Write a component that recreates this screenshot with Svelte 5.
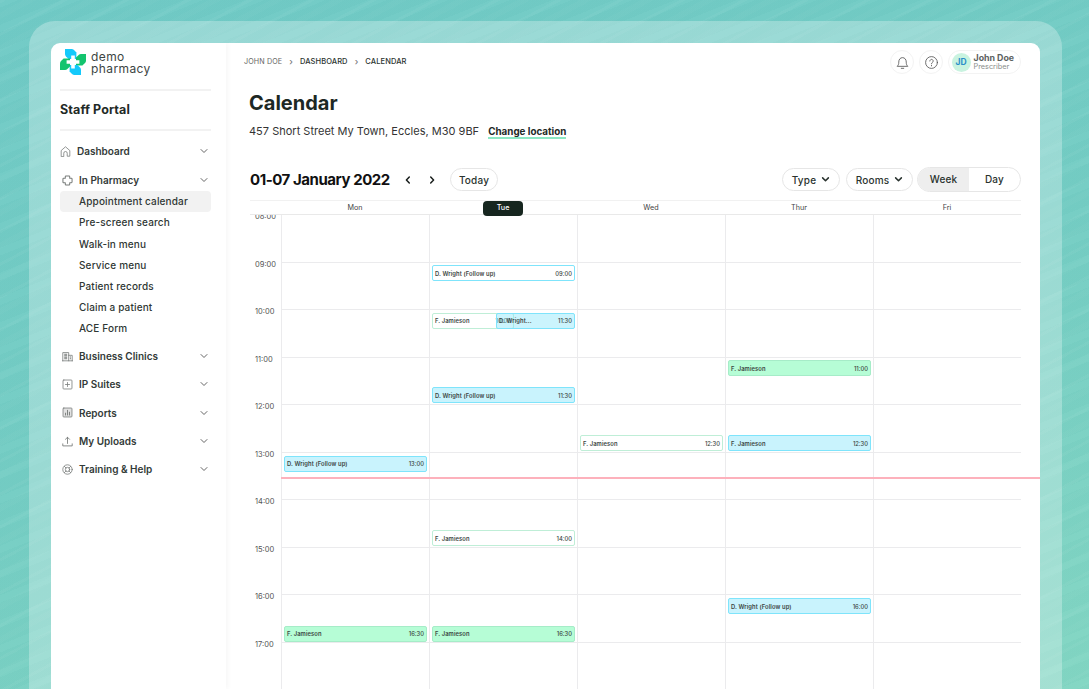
<script>
  const subItems = ['Appointment calendar', 'Pre-screen search', 'Walk-in menu', 'Service menu', 'Patient records', 'Claim a patient', 'ACE Form'];
  const bottomNav = [
    { label: 'Business Clinics', icon: 'clinic' },
    { label: 'IP Suites', icon: 'plus' },
    { label: 'Reports', icon: 'chart' },
    { label: 'My Uploads', icon: 'upload' },
    { label: 'Training & Help', icon: 'help' }
  ];
  const days = ['Mon', 'Tue', 'Wed', 'Thur', 'Fri'];
  const hours = ['08:00', '09:00', '10:00', '11:00', '12:00', '13:00', '14:00', '15:00', '16:00', '17:00'];

  // top = px below the header row, kinds: line / fill, blue / green
  const events = [
    { day: 0, top: 240.5, name: 'D. Wright (Follow up)', time: '13:00', kind: 'blue fill' },
    { day: 0, top: 410.5, name: 'F. Jamieson', time: '16:30', kind: 'green fill' },
    { day: 1, top: 50, name: 'D. Wright (Follow up)', time: '09:00', kind: 'blue' },
    { day: 1, top: 97.5, name: 'F. Jamieson', time: '10:00', kind: 'green half-left' },
    { day: 1, top: 97.5, name: 'D. Wright...', time: '11:30', kind: 'blue fill half-right' },
    { day: 1, top: 172, name: 'D. Wright (Follow up)', time: '11:30', kind: 'blue fill' },
    { day: 1, top: 315, name: 'F. Jamieson', time: '14:00', kind: 'green' },
    { day: 1, top: 410.5, name: 'F. Jamieson', time: '16:30', kind: 'green fill' },
    { day: 2, top: 220, name: 'F. Jamieson', time: '12:30', kind: 'green' },
    { day: 3, top: 145, name: 'F. Jamieson', time: '11:00', kind: 'green fill' },
    { day: 3, top: 220, name: 'F. Jamieson', time: '12:30', kind: 'blue fill' },
    { day: 3, top: 383, name: 'D. Wright (Follow up)', time: '16:00', kind: 'blue fill' }
  ];
</script>

{#snippet chevron()}
  <svg class="chev" viewBox="0 0 10 10"><path d="M2 3.5 5 6.5 8 3.5" fill="none" stroke="#666" stroke-width="1" stroke-linecap="round" stroke-linejoin="round" /></svg>
{/snippet}

{#snippet boldChevron()}
  <svg class="bchev" viewBox="0 0 10 10"><path d="M1.8 3.2 5 6.4 8.2 3.2" fill="none" stroke="#2a332f" stroke-width="1.7" stroke-linecap="round" stroke-linejoin="round" /></svg>
{/snippet}

{#snippet navIcon(name)}
  <svg class="nav-icon" viewBox="0 0 14 14" fill="none" stroke="#777b79" stroke-width="1" stroke-linecap="round" stroke-linejoin="round">
    {#if name === 'home'}
      <path d="M1.5 13V5.8L7 1l5.5 4.8V13H9.2V9.2a2.2 2.2 0 0 0-4.4 0V13Z" />
    {:else if name === 'cross'}
      <path d="M5 1.2h4a.8.8 0 0 1 .8.8v2.2H12a.8.8 0 0 1 .8.8v4a.8.8 0 0 1-.8.8H9.8V12a.8.8 0 0 1-.8.8H5a.8.8 0 0 1-.8-.8V9.8H2a.8.8 0 0 1-.8-.8V5a.8.8 0 0 1 .8-.8h2.2V2a.8.8 0 0 1 .8-.8Z" stroke-width="1.3" />
    {:else if name === 'clinic'}
      <path d="M1 12.5V2h7.500v10.500M8.500 5.500H13v7M.6 12.500h12.800" />
      <path d="M2.800 4h3.800M2.800 6h3.800M2.800 8h3.800M2.800 10h3.800M10 7.500h1.500M10 9.800h1.500" stroke-width="1.3" stroke-linecap="butt" />
    {:else if name === 'plus'}
      <rect x="1.3" y="1.3" width="11.4" height="11.4" rx="1" />
      <path d="M7 4.4v5.200M4.400 7h5.200" />
    {:else if name === 'chart'}
      <rect x="1.3" y="1.3" width="11.4" height="11.4" rx="1" fill="#e2e2e2" />
      <path d="M4.500 10.300V7.800M7 10.300V4.200M9.500 10.300V6.600" stroke-width="1.2" />
    {:else if name === 'upload'}
      <path d="M7 9.500V1.800M4.400 4.200 7 1.600l2.600 2.600M1 10v2.600h12V10" stroke-width="1.1" />
    {:else}
      <circle cx="7" cy="7" r="6" />
      <circle cx="7" cy="7" r="2.8" />
      <path d="M2.900 2.900l2.200 2.200M11.100 2.900 8.900 5.100M2.900 11.100l2.200-2.200M11.100 11.100 8.900 8.900" />
    {/if}
  </svg>
{/snippet}

<div class="frame">
  <div class="window">
    <aside class="sidebar">
      <div class="logo">
        <svg class="logo-mark" viewBox="0 0 26 26">
          {#each [['#14c9fb', 0], ['#13c46e', 90], ['#14c9fb', 180], ['#13c46e', 270]] as [fill, turn]}
            <path d="M5 0H11.5Q13 0 14 1L16.4 3.6V10H8.6L6 7.4Q5 6.4 5 5Z" {fill} transform="rotate({turn} 13 13)" />
          {/each}
          <path d="M11.2 6.6h3.6v4.600h4.600v3.600h-4.600v4.600h-3.600v-4.600H6.600v-3.600h4.600Z" fill="#fff" />
        </svg>
        <div class="logo-text">demo<br />pharmacy</div>
      </div>
      <div class="portal">Staff Portal</div>

      <nav>
        <div class="nav-row first">
          {@render navIcon('home')}
          <span class="nav-label">Dashboard</span>
          {@render chevron()}
        </div>
        <div class="nav-row pharm">
          {@render navIcon('cross')}
          <span class="nav-label">In Pharmacy</span>
          {@render chevron()}
        </div>
        <ul class="sub">
          {#each subItems as item, i}
            <li class:active={i === 0}>{item}</li>
          {/each}
        </ul>
        <div class="nav-rest">
          {#each bottomNav as item}
            <div class="nav-row">
              {@render navIcon(item.icon)}
              <span class="nav-label">{item.label}</span>
              {@render chevron()}
            </div>
          {/each}
        </div>
      </nav>
    </aside>

    <main class="main">
      <header class="topbar">
        <div class="crumbs">
          <span class="crumb-muted">JOHN DOE</span>
          <span class="sep">›</span>
          <span>DASHBOARD</span>
          <span class="sep">›</span>
          <span>CALENDAR</span>
        </div>
        <div class="top-actions">
          <button class="round" aria-label="Notifications">
            <svg viewBox="0 0 16 16" fill="none" stroke="#555" stroke-width="0.9" stroke-linecap="round" stroke-linejoin="round"><path d="M2.6 11.8c1-1 1.4-2 1.4-4.2C4 4.800 5.600 2.800 8 2.800s4 2 4 4.800c0 2.200.4 3.200 1.400 4.200ZM6.700 14.200h2.600" /></svg>
          </button>
          <button class="round" aria-label="Help">
            <svg viewBox="0 0 16 16" fill="none" stroke="#555" stroke-width="0.9" stroke-linecap="round"><circle cx="8" cy="8" r="6.3" /><path d="M6.200 6.400a1.800 1.800 0 1 1 2.700 1.600c-.6.400-.9.700-.9 1.400" /><path d="M8 11.300v.1" stroke-width="1.2" /></svg>
          </button>
          <div class="profile">
            <div class="avatar">JD</div>
            <div class="who">
              <div class="who-name">John Doe</div>
              <div class="who-role">Prescriber</div>
            </div>
          </div>
        </div>
      </header>

      <div class="intro">
        <h1>Calendar</h1>
        <p class="address">457 Short Street My Town, Eccles, M30 9BF <span class="change">Change location</span></p>
      </div>

      <div class="toolbar">
        <div class="date">01-07 January 2022</div>
        <div class="arrows">
          <svg viewBox="0 0 10 10"><path d="M6.300 2 3.400 5l2.900 3" fill="none" stroke="#1a1f1d" stroke-width="1.5" stroke-linecap="round" stroke-linejoin="round" /></svg>
          <svg viewBox="0 0 10 10"><path d="M3.700 2 6.600 5 3.700 8" fill="none" stroke="#1a1f1d" stroke-width="1.5" stroke-linecap="round" stroke-linejoin="round" /></svg>
        </div>
        <button class="pill today">Today</button>
        <div class="filters">
          <button class="pill type">Type {@render boldChevron()}</button>
          <button class="pill rooms">Rooms {@render boldChevron()}</button>
          <div class="segment">
            <span class="seg on">Week</span>
            <span class="seg">Day</span>
          </div>
        </div>
      </div>

      <div class="calendar">
        <div class="cal-head">
          <div></div>
          {#each days as day, i}
            <div class="day-name"><span class:today-pill={i === 1}>{day}</span></div>
          {/each}
        </div>
        <div class="cal-body">
          <div class="times">
            {#each hours as hour}
              <div class="time">{hour}</div>
            {/each}
          </div>
          <div class="columns">
            {#each hours as hour}
              <div class="hour-line"></div>
            {/each}
            <div class="day-cols">
              {#each days as day, d}
                <div class="day-col">
                  {#each events.filter((e) => e.day === d) as ev}
                    <div class="event {ev.kind}" style="top: {ev.top}px">
                      <span class="ev-name">{ev.name}</span>
                      <span class="ev-time">{ev.time}</span>
                    </div>
                  {/each}
                </div>
              {/each}
            </div>
            <div class="now-line"></div>
          </div>
        </div>
      </div>
    </main>
  </div>
</div>

<style>
  :global(body) {
    margin: 0;
    height: 689px;
    overflow: hidden;
    font-family: Inter, 'Liberation Sans', sans-serif;
    background:
      repeating-linear-gradient(152deg, rgba(255, 255, 255, 0.035) 0 3px, rgba(255, 255, 255, 0) 3px 11px, rgba(255, 255, 255, 0.02) 11px 17px, rgba(0, 0, 0, 0) 17px 29px),
      repeating-linear-gradient(158deg, rgba(255, 255, 255, 0.025) 0 7px, rgba(0, 0, 0, 0.008) 7px 23px),
      linear-gradient(165deg, #70cac6 0%, #74cdc4 50%, #82d6c3 100%);
  }

  .frame {
    margin: 21px 27px 0 29px;
    padding: 22px 22px 0;
    height: 646px;
    border-radius: 26px 26px 0 0;
    background: rgba(255, 255, 255, 0.28);
    overflow: hidden;
  }

  .window {
    display: flex;
    height: 646px;
    background: #fff;
    border-radius: 9px 9px 0 0;
    overflow: hidden;
    color: #1d2623;
  }

  .sidebar {
    width: 175px;
    flex: none;
    box-sizing: border-box;
    padding: 6px 15px 0 9px;
    box-shadow: 2px 0 5px rgba(0, 0, 0, 0.035);
    position: relative;
  }

  .logo {
    display: flex;
    align-items: flex-start;
    gap: 5px;
    height: 40px;
    border-bottom: 2px solid #f2f2f2;
  }

  .logo-mark {
    width: 26px;
    height: 26px;
  }

  .logo-text {
    font-size: 12px;
    line-height: 12px;
    letter-spacing: 0.4px;
    color: #3c4543;
    padding-top: 2px;
  }

  .portal {
    height: 38px;
    line-height: 38px;
    font-size: 12.5px;
    font-weight: 700;
    letter-spacing: 0.1px;
    border-bottom: 2px solid #f2f2f2;
    color: #1f2a27;
  }

  .nav-row {
    display: flex;
    align-items: center;
    height: 28.3px;
    font-size: 10px;
    font-weight: 600;
    color: #333b38;
  }

  .nav-row.first {
    margin-top: 6px;
  }

  .pharm {
    margin-top: 4px;
    height: 22px;
  }

  .nav-icon {
    width: 11px;
    height: 11px;
    flex: none;
    margin: 0 6px 0 2px;
  }

  .nav-row.first .nav-icon {
    margin: 0 6px 0 0;
  }

  .nav-label {
    flex: 1;
  }

  .chev {
    width: 10px;
    height: 10px;
    margin-right: 2px;
    flex: none;
  }

  .sub {
    list-style: none;
    margin: 0;
    padding: 0;
  }

  .sub li {
    height: 21.2px;
    line-height: 21.2px;
    padding-left: 19px;
    font-size: 10px;
    font-weight: 500;
    letter-spacing: 0.15px;
    color: #2f3734;
  }

  .sub li.active {
    background: #f2f2f2;
    border-radius: 4px;
  }

  .nav-rest {
    margin-top: 2.4px;
  }

  .main {
    flex: 1;
    min-width: 0;
    position: relative;
  }

  .topbar {
    height: 38px;
    display: flex;
    align-items: center;
    justify-content: space-between;
    padding: 0 19px 0 18px;
  }

  .crumbs {
    display: flex;
    align-items: center;
    gap: 7px;
    margin-top: -1px;
    font-size: 7.5px;
    font-weight: 500;
    color: #2b3330;
    letter-spacing: 0.1px;
  }

  .crumb-muted {
    color: #666;
    font-weight: 400;
    font-size: 7.2px;
  }

  .sep {
    color: #777;
    font-size: 9px;
  }

  .top-actions {
    display: flex;
    align-items: center;
    gap: 5px;
  }

  .round {
    width: 24px;
    height: 24px;
    border-radius: 50%;
    border: 1px solid #f3f3f3;
    background: #fff;
    padding: 0;
    display: flex;
    align-items: center;
    justify-content: center;
  }

  .round svg {
    width: 15px;
    height: 15px;
  }

  .profile {
    display: flex;
    align-items: center;
    gap: 3px;
    height: 24px;
    width: 73px;
    box-sizing: border-box;
    padding-left: 2.5px;
    border: 1px solid #f3f3f3;
    border-radius: 12px;
  }

  .avatar {
    width: 19px;
    height: 19px;
    border-radius: 50%;
    background: #c9f3e0;
    color: #2b8fc9;
    font-size: 8.5px;
    font-weight: 700;
    text-align: center;
    line-height: 19px;
  }

  .who-name {
    font-size: 8.8px;
    font-weight: 700;
    color: #5c615f;
    line-height: 9px;
  }

  .who-role {
    font-size: 7.3px;
    color: #8a8e8c;
    line-height: 9px;
  }

  .intro {
    padding: 0 0 0 23px;
    height: 72px;
  }

  h1 {
    margin: 0;
    padding-top: 9px;
    font-size: 20px;
    line-height: 26px;
    font-weight: 700;
    color: #1d2824;
  }

  .address {
    margin: 8px 0 0;
    font-size: 11px;
    line-height: 14px;
    letter-spacing: 0.01px;
    color: #333;
  }

  .change {
    margin-left: 6px;
    font-weight: 700;
    font-size: 9.8px;
    color: #1f2a27;
    border-bottom: 2px solid #8ce8c4;
  }

  .toolbar {
    display: flex;
    align-items: center;
    margin-left: 24px;
    width: 771px;
    height: 25px;
    margin-top: 14px;
  }

  .date {
    font-size: 15px;
    font-weight: 700;
    color: #111;
    width: 153px;
    letter-spacing: -0.45px;
  }

  .arrows {
    display: flex;
    gap: 14px;
    width: 47px;
  }

  .arrows svg {
    width: 10px;
    height: 10px;
  }

  .pill {
    font: inherit;
    font-size: 10px;
    font-weight: 500;
    letter-spacing: 0.2px;
    color: #2a332f;
    height: 23px;
    background: #fff;
    border: 1px solid #e6e6e6;
    border-radius: 12px;
    padding: 0;
    display: flex;
    align-items: center;
    justify-content: center;
    gap: 5px;
  }

  .today {
    width: 48px;
  }

  .type {
    width: 58px;
  }

  .rooms {
    width: 67px;
  }

  .bchev {
    width: 9px;
    height: 9px;
  }

  .filters {
    margin-left: auto;
    display: flex;
    align-items: center;
    gap: 6px;
  }

  .segment {
    display: flex;
    width: 104px;
    height: 25px;
    box-sizing: border-box;
    margin-left: -2px;
    border: 1px solid #e6e6e6;
    border-radius: 13px;
    overflow: hidden;
    font-size: 10px;
    font-weight: 500;
    letter-spacing: 0.2px;
    color: #2a332f;
  }

  .seg {
    flex: 1;
    text-align: center;
    line-height: 23px;
  }

  .seg.on {
    background: #eeeeee;
  }

  .calendar {
    margin-left: 24px;
    width: 771px;
    margin-top: 8px;
  }

  .cal-head {
    display: grid;
    grid-template-columns: 31px repeat(5, 148px);
    height: 13px;
    border-top: 1px solid #f1f1f1;
    border-bottom: 1px solid #e9e9e9;
  }

  .day-name {
    text-align: center;
    font-size: 7.2px;
    line-height: 13px;
    color: #444;
  }

  .today-pill {
    display: inline-block;
    width: 40px;
    height: 15px;
    line-height: 13px;
    background: #16261f;
    color: #fff;
    border-radius: 4px;
    font-weight: 500;
  }

  .cal-body {
    display: flex;
    height: 480px;
  }

  .times {
    width: 31px;
    flex: none;
  }

  .time {
    height: 47.55px;
    font-size: 7.5px;
    color: #555;
    padding-left: 5px;
    box-sizing: border-box;
    line-height: 10px;
    position: relative;
    top: -3px;
  }

  .time:first-child {
    height: 44.55px;
    margin-top: 3px;
    line-height: 3px;
    overflow: hidden;
  }

  .columns {
    position: relative;
    width: 740px;
  }

  .hour-line {
    height: 47.55px;
    box-sizing: border-box;
    border-bottom: 1px solid #ebebed;
  }

  .day-cols {
    position: absolute;
    inset: 0;
    display: flex;
  }

  .day-col {
    width: 148px;
    position: relative;
    box-sizing: border-box;
    border-left: 1px solid #ebebed;
  }

  .event {
    position: absolute;
    left: 2px;
    width: 143px;
    height: 16px;
    box-sizing: border-box;
    border: 1px solid;
    border-radius: 2px;
    display: flex;
    align-items: center;
    justify-content: space-between;
    padding: 0 2px;
    font-size: 5.8px;
    font-weight: 500;
    color: #3a4441;
    background: #fff;
    overflow: hidden;
  }

  .ev-name {
    font-weight: 600;
    letter-spacing: 0.1px;
  }

  .event.blue {
    border-color: #7fe4fb;
  }

  .event.green {
    border-color: #bfeed7;
  }

  .event.blue.fill {
    background: #c9f3fd;
  }

  .event.green.fill {
    background: #b6fdd6;
    border-color: #a6ecc8;
  }

  .half-left {
    width: 82px;
  }

  .event.blue.fill.half-right {
    left: 66px;
    width: 79px;
    background: rgba(130, 228, 250, 0.42);
  }

  .now-line {
    position: absolute;
    left: 0;
    top: 261.5px;
    width: 760px;
    height: 2px;
    background: #fdb1bc;
  }
</style>
